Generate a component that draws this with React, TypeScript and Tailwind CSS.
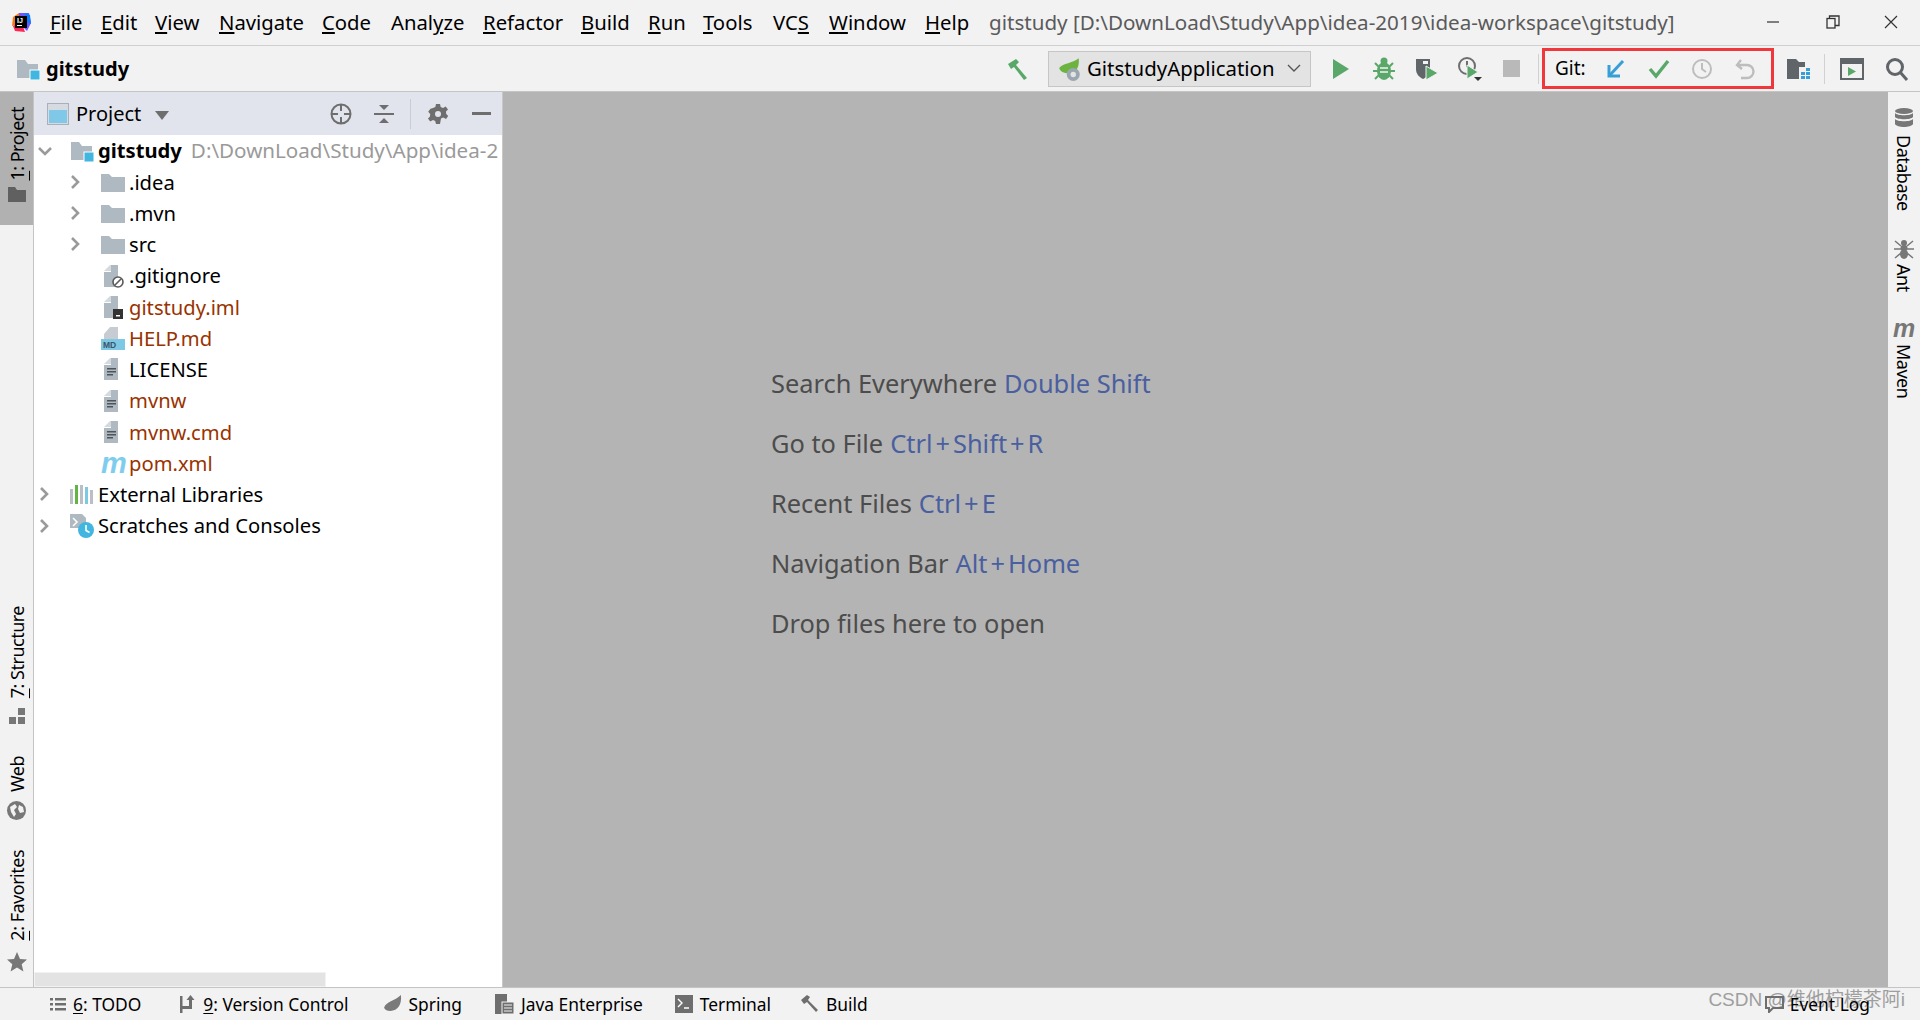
import React from "react";

const FONT = "font-['Noto_Sans','Open_Sans',sans-serif]";

const U = ({ c }: { c: string }) => <span className="underline underline-offset-2">{c}</span>;

const Logo = () => (
  <svg width="22" height="22" viewBox="0 0 22 22">
    <path d="M3 6 L9 2 L11 12 L2 15Z" fill="#f97a12" />
    <path d="M9 2 L19 2 L21 12 L17 20 L9 12Z" fill="#6b57ff" />
    <path d="M3 15 L11 10 L15 21 L5 20Z" fill="#fe2857" />
    <path d="M15 2 L20 4 L21 13 L16 10Z" fill="#087cfa" />
    <rect x="5" y="5" width="12" height="12" fill="#000" />
    <rect x="7" y="14" width="5" height="1" fill="#fff" />
    <text x="7" y="12" fontSize="7" fontWeight="700" fill="#fff" fontFamily="Liberation Sans">IJ</text>
  </svg>
);

const Folder = ({ badge }: { badge?: boolean }) => (
  <svg width="24" height="22" viewBox="0 0 24 22">
    <path d="M1 2h8l3 4h10v14H1z" fill="#afb9c1" />
    {badge && <rect x="14" y="12" width="10" height="10" fill="#40b6e0" stroke="#fff" strokeWidth="1" />}
  </svg>
);

const Dir = () => (
  <svg width="24" height="20" viewBox="0 0 24 20">
    <path d="M0 2h8l3 3h13v15H0z" fill="#afb9c1" />
  </svg>
);

const FileIcon = ({ lines, children }: { lines?: boolean; children?: React.ReactNode }) => (
  <svg width="24" height="24" viewBox="0 0 24 24">
    <path d="M9 1h8v6H3z" fill="#d5dadf" />
    <path d="M17 1v22H3V8h7V1z" fill="#afb9c1" />
    <path d="M4 7 L9 2 L9 7Z" fill="#d5dadf" />
    {lines && (
      <g fill="#4f5459">
        <rect x="6" y="11" width="9" height="1.5" />
        <rect x="6" y="14" width="9" height="1.5" />
        <rect x="6" y="17" width="6" height="1.5" />
      </g>
    )}
    {children}
  </svg>
);

const Chev = ({ down }: { down?: boolean }) => (
  <svg width="14" height="14" viewBox="0 0 14 14" fill="none" stroke="#9a9a9a" strokeWidth="2.6">
    {down ? <path d="M1 4l6 6 6-6" /> : <path d="M3 1l6 6-6 6" />}
  </svg>
);

type Row = { indent: number; chev?: "r" | "d"; icon: React.ReactNode; name: string; color?: string; bold?: boolean; path?: string };

const rows: Row[] = [
  { indent: 0, chev: "d", icon: <Folder badge />, name: "gitstudy", bold: true, path: "D:\\DownLoad\\Study\\App\\idea-2" },
  { indent: 1, chev: "r", icon: <Dir />, name: ".idea" },
  { indent: 1, chev: "r", icon: <Dir />, name: ".mvn" },
  { indent: 1, chev: "r", icon: <Dir />, name: "src" },
  {
    indent: 1,
    icon: (
      <FileIcon>
        <circle cx="17" cy="18" r="5" fill="#fff" stroke="#5a5a5a" strokeWidth="1.6" />
        <path d="M14 21l6-6" stroke="#5a5a5a" strokeWidth="1.6" />
      </FileIcon>
    ),
    name: ".gitignore",
  },
  {
    indent: 1,
    icon: (
      <FileIcon>
        <rect x="12" y="14" width="10" height="10" fill="#333" />
        <rect x="15" y="20" width="4" height="1.5" fill="#fff" />
      </FileIcon>
    ),
    name: "gitstudy.iml",
    color: "text-[#993300]",
  },
  {
    indent: 1,
    icon: (
      <svg width="24" height="24" viewBox="0 0 24 24">
        <path d="M9 1h8v12H3V8z" fill="#c6ccd2" />
        <rect x="0" y="13" width="24" height="11" fill="#7ec8e6" />
        <text x="2" y="22" fontSize="8.5" fontWeight="700" fill="#3b5566" fontFamily="Liberation Sans">MD</text>
      </svg>
    ),
    name: "HELP.md",
    color: "text-[#993300]",
  },
  { indent: 1, icon: <FileIcon lines />, name: "LICENSE" },
  { indent: 1, icon: <FileIcon lines />, name: "mvnw", color: "text-[#993300]" },
  { indent: 1, icon: <FileIcon lines />, name: "mvnw.cmd", color: "text-[#993300]" },
  {
    indent: 1,
    icon: <span className="block w-6 text-[29px] leading-[24px] italic font-bold text-[#7fcdee] font-['Liberation_Sans',sans-serif]">m</span>,
    name: "pom.xml",
    color: "text-[#993300]",
  },
  {
    indent: 0,
    chev: "r",
    icon: (
      <svg width="24" height="22" viewBox="0 0 24 22">
        <rect x="0" y="6" width="3" height="15" fill="#b9bfc5" />
        <rect x="5" y="2" width="3" height="19" fill="#62b543" />
        <rect x="10" y="2" width="3" height="19" fill="#b9bfc5" />
        <rect x="15" y="4" width="3" height="17" fill="#7ec8e6" />
        <rect x="20" y="7" width="3" height="14" fill="#b9bfc5" />
      </svg>
    ),
    name: "External Libraries",
  },
  {
    indent: 0,
    chev: "r",
    icon: (
      <svg width="24" height="24" viewBox="0 0 24 24">
        <path d="M0 0h12l4 4v10H0z" fill="#afb9c1" />
        <path d="M3 4l4 4-4 4" fill="none" stroke="#fff" strokeWidth="1.5" />
        <circle cx="16" cy="16" r="8" fill="#40b6e0" />
        <path d="M16 11v5.5l3.5 2" fill="none" stroke="#fff" strokeWidth="1.6" />
      </svg>
    ),
    name: "Scratches and Consoles",
  },
];

const Vert = ({ children, left }: { children: React.ReactNode; left?: boolean }) => (
  <span className={`[writing-mode:vertical-rl] text-[18px] tracking-[-0.5px] leading-[22px] text-black whitespace-nowrap ${left ? "rotate-180" : ""}`}>{children}</span>
);

const Hint = ({ a, b }: { a: string; b?: string }) => (
  <div className="h-[60px] flex items-center text-[25.4px] text-[#4c4c4c] whitespace-nowrap">
    {a}
    {b && (
      <span className="ml-[7px] text-[#4a5f9f]">
        {b.split("+").map((part, i) => (
          <span key={part}>
            {i > 0 && <span className="mx-[3px]">+</span>}
            {part}
          </span>
        ))}
      </span>
    )}
  </div>
);

const Menu = ({ k, rest, pre, cls }: { k: string; rest: string; pre?: string; cls: string }) => (
  <span className={`${cls} shrink-0`}>
    {pre}
    <U c={k} />
    {rest}
  </span>
);

const Tool = ({ children, w = "w-[43px]" }: { children: React.ReactNode; w?: string }) => (
  <div className={`${w} h-[30px] flex items-center justify-center shrink-0`}>{children}</div>
);

const Sep = () => <div className="w-px h-[30px] bg-[#d1d1d1] shrink-0" />;

const Status = ({ icon, label, cls }: { icon: React.ReactNode; label: React.ReactNode; cls: string }) => (
  <div className={`flex items-center gap-[7px] shrink-0 ${cls}`}>
    {icon}
    <span>{label}</span>
  </div>
);

export default function App() {
  return (
    <div className={`${FONT} w-[1920px] h-[1020px] bg-[#f2f2f2] flex flex-col overflow-hidden relative text-black`}>
      {/* Title bar */}
      <div className="h-[46px] shrink-0 border-b border-[#cfcfcf] flex items-center text-[20.3px] pl-[10px] pb-[1px]">
        <Logo />
        <div className="flex items-center ml-[18px]">
          <Menu k="F" rest="ile" cls="w-[51px]" />
          <Menu k="E" rest="dit" cls="w-[54px]" />
          <Menu k="V" rest="iew" cls="w-[64px]" />
          <Menu k="N" rest="avigate" cls="w-[103px]" />
          <Menu k="C" rest="ode" cls="w-[69px]" />
          <Menu pre="Anal" k="y" rest="ze" cls="w-[92px]" />
          <Menu k="R" rest="efactor" cls="w-[98px]" />
          <Menu k="B" rest="uild" cls="w-[67px]" />
          <Menu k="R" rest="un" cls="w-[55px]" />
          <Menu k="T" rest="ools" cls="w-[70px]" />
          <Menu pre="VC" k="S" rest="" cls="w-[56px]" />
          <Menu k="W" rest="indow" cls="w-[96px]" />
          <Menu k="H" rest="elp" cls="w-[64px]" />
        </div>
        <span className="text-[20.6px] text-[#5a5a5a] whitespace-nowrap">gitstudy [D:\DownLoad\Study\App\idea-2019\idea-workspace\gitstudy]</span>
        <div className="ml-auto pr-[2px] flex items-center text-[#333] shrink-0">
          <div className="w-[60px] flex justify-center">
            <svg width="12" height="12" viewBox="0 0 12 12"><path d="M0 6h12" stroke="#333" strokeWidth="1.2" /></svg>
          </div>
          <div className="w-[60px] flex justify-center">
            <svg width="14" height="14" viewBox="0 0 14 14" fill="none" stroke="#333" strokeWidth="1.3"><rect x="1" y="3.5" width="8" height="9.5" /><path d="M3.5 3.5V1H13v9.5h-4" /></svg>
          </div>
          <div className="w-[55px] flex justify-center">
            <svg width="14" height="14" viewBox="0 0 14 14" stroke="#333" strokeWidth="1.2"><path d="M1 1l12 12M13 1L1 13" /></svg>
          </div>
        </div>
      </div>

      {/* Navigation toolbar */}
      <div className="h-[46px] shrink-0 border-b border-[#c4c4c4] flex items-center pl-[16px]">
        <Folder badge />
        <span className="ml-[6px] text-[20px] font-bold">gitstudy</span>
        <div className="ml-auto flex items-center pr-[5px]">
          <Tool>
            <svg width="24" height="24" viewBox="0 0 24 24"><path d="M2 7l8-5 3 3-3 3 11 13-3 2L8 10 5 12z" fill="#59a869" /></svg>
          </Tool>
          <div className="ml-[9px] mr-[8px] w-[263px] h-[36px] bg-[#e3e3e3] border border-[#c6c6c6] flex items-center pl-[8px] text-[20.4px] relative">
            <svg width="26" height="26" viewBox="0 0 24 24">
              <path d="M20 2c1 8-2 13-9 14C6 16 3 14 2 11 6 6 14 7 20 2z" fill="#6db33f" />
              <circle cx="15" cy="17" r="6" fill="#9aa7b0" />
              <circle cx="15" cy="17" r="2.5" fill="#e3e3e3" />
            </svg>
            <span className="ml-[4px]">GitstudyApplication</span>
            <svg className="ml-auto mr-[9px]" width="14" height="9" viewBox="0 0 14 9" fill="none" stroke="#555" strokeWidth="1.4"><path d="M1 1l6 6 6-6" /></svg>
          </div>
          <Tool>
            <svg width="16" height="20" viewBox="0 0 16 20"><path d="M0 0l16 10L0 20z" fill="#59a869" /></svg>
          </Tool>
          <Tool>
            <svg width="22" height="24" viewBox="0 0 22 24" fill="#59a869">
              <ellipse cx="11" cy="14" rx="7" ry="9" />
              <circle cx="11" cy="4" r="3.5" />
              <path d="M2 6l4 4M20 6l-4 4M0 14h5M17 14h5M2 22l4-4M20 22l-4-4" stroke="#59a869" strokeWidth="2" />
              <path d="M7 11h8M7 15h8" stroke="#f2f2f2" strokeWidth="1.6" />
            </svg>
          </Tool>
          <Tool>
            <svg width="24" height="24" viewBox="0 0 24 24">
              <path d="M1 2h14v10c0 5-3 8-7 10-4-2-7-5-7-10z" fill="#5f6569" />
              <path d="M8 4h5v3H8z" fill="#f2f2f2" />
              <path d="M11 9l12 7-12 7z" fill="#59a869" stroke="#f2f2f2" />
            </svg>
          </Tool>
          <Tool>
            <svg width="26" height="26" viewBox="0 0 26 26">
              <circle cx="10" cy="10" r="8" fill="none" stroke="#6e6e6e" strokeWidth="2" />
              <path d="M10 5v5l3 3" fill="none" stroke="#6e6e6e" strokeWidth="2" />
              <path d="M10 9l11 7-11 7z" fill="#59a869" stroke="#f2f2f2" />
              <path d="M17 21h8l-4 4z" fill="#333" />
            </svg>
          </Tool>
          <Tool w="w-[47px]">
            <div className="w-[17px] h-[17px] bg-[#b9b9b9] mr-[7px]" />
          </Tool>
          <Sep />
          <div className="w-[3px]" />
          <div className="h-[41px] w-[232px] border-[3px] border-[#f0373c] flex items-center shrink-0">
            <span className="ml-[10px] w-[39px] text-[19px]">Git:</span>
            <Tool w="w-[43px]">
              <svg width="22" height="22" viewBox="0 0 22 22" fill="none" stroke="#389fd6" strokeWidth="3"><path d="M18 3L5 17" /><path d="M4 7v11h11" /></svg>
            </Tool>
            <Tool w="w-[43px]">
              <svg width="22" height="20" viewBox="0 0 22 20" fill="none" stroke="#59a869" strokeWidth="3.4"><path d="M2 10l6 7L20 2" /></svg>
            </Tool>
            <Tool w="w-[43px]">
              <svg width="22" height="22" viewBox="0 0 22 22" fill="none" stroke="#bdbdbd" strokeWidth="2"><circle cx="11" cy="11" r="9" /><path d="M11 5v6l4 3" /></svg>
            </Tool>
            <Tool w="w-[43px]">
              <svg width="22" height="22" viewBox="0 0 22 22" fill="none" stroke="#bdbdbd" strokeWidth="2.4"><path d="M7 2L3 7l5 4" /><path d="M3 7h10a6 6 0 010 13H7" /></svg>
            </Tool>
          </div>
          <Tool w="w-[50px]">
            <svg width="24" height="22" viewBox="0 0 24 22">
              <path d="M0 1h9l3 3h6v17H0z" fill="#5f6569" />
              <rect x="12" y="9" width="12" height="13" fill="#f2f2f2" />
              <g fill="#389fd6"><rect x="19" y="10" width="4" height="3" /><rect x="14" y="14" width="4" height="3" /><rect x="19" y="14" width="4" height="3" /><rect x="14" y="18" width="4" height="3" /><rect x="19" y="18" width="4" height="3" /></g>
            </svg>
          </Tool>
          <Sep />
          <Tool w="w-[54px]">
            <svg width="24" height="22" viewBox="0 0 24 22">
              <rect x="1" y="1" width="22" height="20" fill="#f2f2f2" stroke="#5f6569" strokeWidth="2" />
              <rect x="1" y="1" width="22" height="5" fill="#5f6569" />
              <path d="M8 9l8 4.5L8 18z" fill="#59a869" />
            </svg>
          </Tool>
          <Tool w="w-[36px]">
            <svg width="24" height="24" viewBox="0 0 24 24" fill="none" stroke="#5f6569" strokeWidth="3"><circle cx="10" cy="10" r="7.5" /><path d="M15 15l7 8" /></svg>
          </Tool>
        </div>
      </div>

      {/* Main */}
      <div className="flex-1 min-h-0 flex">
        {/* Left strip */}
        <div className="w-[34px] shrink-0 border-r border-[#c4c4c4] flex flex-col items-stretch">
          <div className="h-[133px] bg-[#b1b1b1] flex flex-col items-center pt-[15px] gap-[5px] shrink-0">
            <Vert left>
              <U c="1" />: Project
            </Vert>
            <svg width="18" height="16" viewBox="0 0 18 16"><path d="M0 1h7l2 3h9v12H0z" fill="#606060" /></svg>
          </div>
          <div className="mt-auto flex flex-col items-center pb-[15px]">
            <Vert left>
              <U c="7" />: Structure
            </Vert>
            <svg className="mt-[10px]" width="16" height="16" viewBox="0 0 16 16" fill="#777"><rect x="9" y="0" width="7" height="7" /><rect x="0" y="9" width="7" height="7" /><rect x="9" y="9" width="7" height="7" /></svg>
            <div className="mt-[32px]">
              <Vert left>Web</Vert>
            </div>
            <svg className="mt-[3px]" width="19" height="19" viewBox="0 0 19 19"><circle cx="9.5" cy="9.5" r="9.5" fill="#777" /><path d="M3 6l5-3 2 3-3 3 2 4-2 3-3-5zM12 4l4 2 1 5-4 1-2-4z" fill="#f2f2f2" /></svg>
            <div className="mt-[30px]">
              <Vert left>
                <U c="2" />: Favorites
              </Vert>
            </div>
            <svg className="mt-[5px]" width="20" height="20" viewBox="0 0 20 20"><path d="M10 0l3 7 7 .6-5.3 4.6 1.7 7.3L10 15.6l-6.4 3.9 1.7-7.3L0 7.6 7 7z" fill="#777" /></svg>
          </div>
        </div>

        {/* Project panel */}
        <div className="w-[469px] shrink-0 border-r border-[#c8c8c8] bg-white flex flex-col relative overflow-hidden">
          <div className="h-[43px] shrink-0 bg-[#e1e4ec] flex items-center text-[20px] pl-[13px]">
            <svg width="22" height="22" viewBox="0 0 22 22">
              <rect x="0.5" y="0.5" width="21" height="21" fill="#d6dbe2" stroke="#a9b0b8" />
              <rect x="2" y="7" width="18" height="13" fill="#7fc8e8" />
            </svg>
            <span className="ml-[7px]">Project</span>
            <svg className="ml-[14px] mt-[3px]" width="14" height="9" viewBox="0 0 14 9"><path d="M0 0h14L7 9z" fill="#6e6e6e" /></svg>
            <div className="ml-auto flex items-center">
              <Tool w="w-[43px]">
                <svg width="22" height="22" viewBox="0 0 22 22" fill="none" stroke="#6e6e6e" strokeWidth="2"><circle cx="11" cy="11" r="9.5" /><path d="M11 2v6M11 14v6M2 11h6M14 11h6" /></svg>
              </Tool>
              <Tool w="w-[43px]">
                <svg width="20" height="20" viewBox="0 0 20 20"><path d="M5 1h10l-5 5zM5 19h10l-5-5z" fill="#6e6e6e" /><path d="M0 10h20" stroke="#6e6e6e" strokeWidth="2" /></svg>
              </Tool>
              <div className="w-px h-[30px] bg-[#c8ccd4] ml-[5px] mr-[2px]" />
              <Tool w="w-[50px]">
                <svg width="20" height="20" viewBox="0 0 20 20">
                  <path d="M8 0h4l.7 3 2.3 1 2.7-1.6 2.3 3-2 2.2.2 2.4 2 2-2.2 3-2.8-1.4-2.2 1L12 20H8l-.8-3-2.2-1-2.8 1.4-2.2-3 2-2 .2-2.4-2-2.2 2.3-3L5 4l2.3-1z" fill="#6e6e6e" />
                  <circle cx="10" cy="10" r="3" fill="#e1e4ec" />
                </svg>
              </Tool>
              <Tool w="w-[36px]">
                <div className="w-[19px] h-[3px] bg-[#6e6e6e]" />
              </Tool>
              <div className="w-[3px]" />
            </div>
          </div>
          <div className="flex-1 min-h-0">
            {rows.map((r) => (
              <div key={r.name} className="h-[31.25px] flex items-center whitespace-nowrap text-[20.2px]">
                <div className={`shrink-0 flex justify-center ${r.indent ? "ml-[35px]" : "ml-[4px]"} w-[14px]`}>
                  {r.chev && <Chev down={r.chev === "d"} />}
                </div>
                <div className="shrink-0 w-[24px] flex justify-center ml-[18px]">{r.icon}</div>
                <span className={`ml-[4px] ${r.bold ? "font-bold" : ""} ${r.color ?? "text-black"}`}>{r.name}</span>
                {r.path && <span className="ml-[9px] text-[20.6px] text-[#9a9a9a]">{r.path}</span>}
              </div>
            ))}
          </div>
          <div className="absolute left-0 bottom-0 w-[292px] h-[15px] bg-[#e3e3e3] border border-[#f2f2f2]" />
        </div>

        {/* Editor */}
        <div className="flex-1 min-w-0 bg-[#b4b4b4] flex flex-col pl-[268px] pt-[261px]">
          <Hint a="Search Everywhere" b="Double Shift" />
          <Hint a="Go to File" b="Ctrl+Shift+R" />
          <Hint a="Recent Files" b="Ctrl+E" />
          <Hint a="Navigation Bar" b="Alt+Home" />
          <Hint a="Drop files here to open" />
        </div>

        {/* Right strip */}
        <div className="w-[32px] shrink-0 flex flex-col items-center pt-[16px]">
          <svg width="18" height="20" viewBox="0 0 18 20" fill="#777">
            <ellipse cx="9" cy="3" rx="9" ry="3" />
            <path d="M0 5c2 3 16 3 18 0v4c-2 3-16 3-18 0zM0 11c2 3 16 3 18 0v5c-2 4-16 4-18 0z" />
          </svg>
          <div className="mt-[7px]">
            <Vert>Database</Vert>
          </div>
          <svg className="mt-[22px]" width="20" height="20" viewBox="0 0 20 20" fill="#777">
            <circle cx="10" cy="4" r="3" />
            <ellipse cx="10" cy="9" rx="3.5" ry="3" />
            <ellipse cx="10" cy="15" rx="4" ry="5" />
            <path d="M1 2l6 5M19 2l-6 5M0 10h7M20 10h-7M1 19l6-5M19 19l-6-5" stroke="#777" strokeWidth="1.5" />
          </svg>
          <div className="mt-[5px]">
            <Vert>Ant</Vert>
          </div>
          <span className="mt-[20px] h-[22px] text-[25px] leading-[22px] font-bold italic text-[#777] font-['Liberation_Sans',sans-serif]">m</span>
          <div className="mt-[5px]">
            <Vert>Maven</Vert>
          </div>
        </div>
      </div>

      {/* Status bar */}
      <div className="h-[33px] shrink-0 border-t border-[#c4c4c4] flex items-center text-[17.4px] relative">
        <Status
          cls="ml-[50px]"
          icon={<svg width="16" height="14" viewBox="0 0 16 14" fill="#6e6e6e"><rect x="0" y="1" width="3" height="2.5" /><rect x="5" y="1" width="11" height="2.5" /><rect x="0" y="6" width="3" height="2.5" /><rect x="5" y="6" width="11" height="2.5" /><rect x="0" y="11" width="3" height="2.5" /><rect x="5" y="11" width="11" height="2.5" /></svg>}
          label={<><U c="6" />: TODO</>}
        />
        <Status
          cls="ml-[39px]"
          icon={<svg width="16" height="18" viewBox="0 0 16 18" fill="#6e6e6e"><rect x="0" y="1" width="2.5" height="17" /><path d="M0 11h9V5h-2.5l4-5 4 5H12v9H0z" /></svg>}
          label={<><U c="9" />: Version Control</>}
        />
        <Status
          cls="ml-[34px]"
          icon={<svg width="19" height="17" viewBox="0 0 18 16"><path d="M17 0c1 9-3 15-10 15-3 0-5-1-6-3C3 6 11 6 17 0z" fill="#7a7a7a" /></svg>}
          label="Spring"
        />
        <Status
          cls="ml-[33px]"
          icon={<svg width="19" height="20" viewBox="0 0 19 20"><path d="M0 0h12v20H0z" fill="#6e6e6e" /><rect x="7" y="8" width="12" height="12" fill="#6e6e6e" stroke="#f2f2f2" /><path d="M9 11h8M9 14h8M9 17h8" stroke="#f2f2f2" /></svg>}
          label="Java Enterprise"
        />
        <Status
          cls="ml-[32px]"
          icon={<svg width="18" height="18" viewBox="0 0 18 18"><rect width="18" height="18" fill="#6e6e6e" /><path d="M3 4l4 4-4 4M9 13h5" fill="none" stroke="#fff" strokeWidth="1.4" /></svg>}
          label="Terminal"
        />
        <Status
          cls="ml-[29px]"
          icon={<svg width="19" height="19" viewBox="0 0 19 19"><path d="M1 6l6-5 3 2-2 3 10 10-2 2L7 8 4 10z" fill="#6e6e6e" /></svg>}
          label="Build"
        />
        <span className="absolute right-[15px] top-[-2px] text-[19px] text-[#8a8a8a] opacity-80 whitespace-nowrap font-['Liberation_Sans','Noto_Sans_CJK_SC',sans-serif]">CSDN @维他柠檬茶阿i</span>
        <div className="ml-auto mr-[50px] flex items-center gap-[5px] shrink-0 relative">
          <svg width="20" height="18" viewBox="0 0 20 18" fill="none" stroke="#6e6e6e" strokeWidth="2"><path d="M1 2h17v11H8l-4 4v-4H1z" /></svg>
          <span>Event Log</span>
        </div>
      </div>
    </div>
  );
}
